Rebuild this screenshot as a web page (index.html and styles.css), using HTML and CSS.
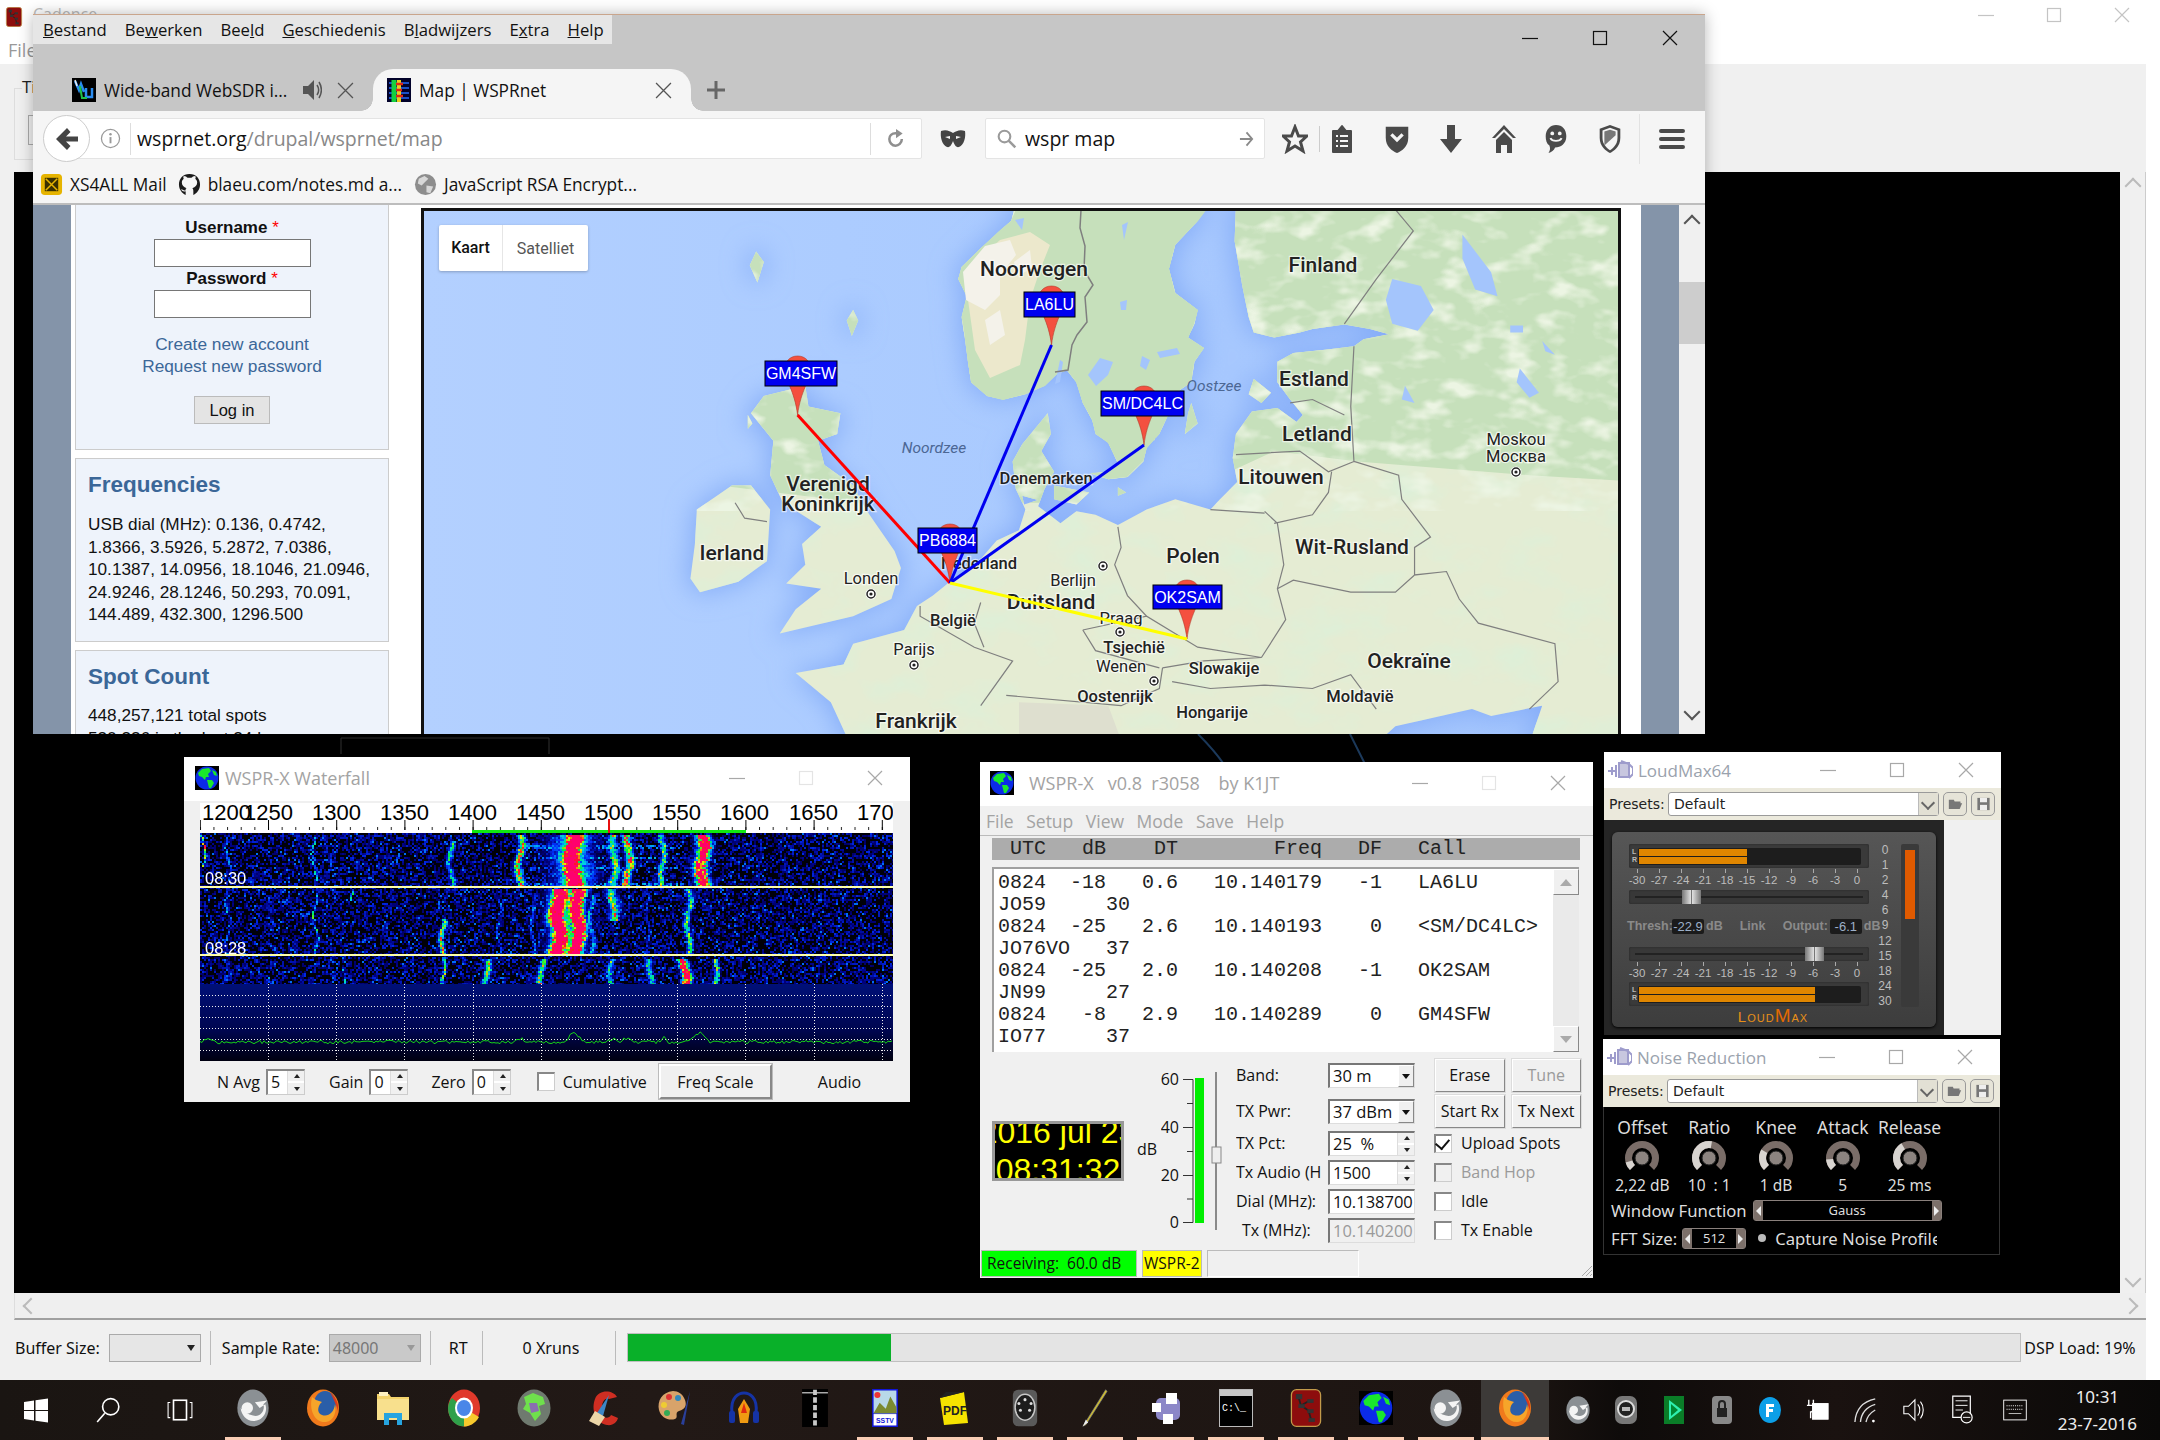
FILE: index.html
```html
<!DOCTYPE html>
<html lang="nl">
<head>
<meta charset="utf-8">
<title>Desktop</title>
<link rel="stylesheet" href="styles.css">
</head>
<body>
<svg class="defs" width="0" height="0" aria-hidden="true">
  <symbol id="min" viewBox="0 0 16 16"><path d="M0 8.5H16" stroke="currentColor" stroke-width="1.2" fill="none"/></symbol>
  <symbol id="max" viewBox="0 0 16 16"><rect x="1.5" y="1.5" width="13" height="13" stroke="currentColor" stroke-width="1.2" fill="none"/></symbol>
  <symbol id="cls" viewBox="0 0 16 16"><path d="M1 1L15 15M15 1L1 15" stroke="currentColor" stroke-width="1.2" fill="none"/></symbol>
  <symbol id="earth" viewBox="0 0 24 24"><rect width="24" height="24" fill="#000"/><circle cx="12" cy="12" r="11.5" fill="#0b2be8"/><path d="M3 7L7 3L14 2L16 5L13 8L14 11L11 11L10 14L7 11L4 10ZM12 14L17 14L19 17L16 22L14 22L13 18ZM17 4L21 6L22 10L19 9Z" fill="#19e82c"/></symbol>
  <symbol id="cad" viewBox="0 0 24 30"><rect x=".5" y=".5" width="23" height="29" rx="4" fill="#8d0d0d" stroke="#c29a4a"/><path d="M6 6L8 13L14 17L16 24M8 13L15 9" stroke="#222" stroke-width="1.4" fill="none"/><rect x="4" y="4" width="5" height="4" fill="#333"/><rect x="6" y="12" width="5" height="3" fill="#333"/><rect x="13" y="8" width="5" height="3" fill="#333"/><rect x="13" y="16" width="5" height="3" fill="#333"/><rect x="14" y="23" width="5" height="3" fill="#333"/></symbol>
  <symbol id="swirl" viewBox="0 0 34 40"><ellipse cx="17" cy="20" rx="16.5" ry="19.5" fill="#8b9094"/><path d="M4 20C5 30 14 37 24 32C30 29 32 22 30 16L24 20L19 14L32 12L28 16C30 24 24 30 17 28C12 27 7 24 4 20Z" fill="#f4f4f4"/><circle cx="11" cy="20" r="6" fill="#f4f4f4"/></symbol>
  <symbol id="ff" viewBox="0 0 34 38"><ellipse cx="17" cy="19" rx="16" ry="18.5" fill="#f07a1c"/><ellipse cx="19" cy="15" rx="11" ry="13" fill="#2a5ea8"/><path d="M6 8C3 20 8 34 20 33C28 32 31 22 29 15C28 24 22 28 16 26C10 24 12 16 16 13L10 11Z" fill="#f6a52a"/><path d="M24 3C30 9 33 14 32 22C30 15 27 9 24 3Z" fill="#d9391b"/></symbol>
  <symbol id="folder" viewBox="0 0 34 38"><path d="M1 5H13L15 8H33V31H1Z" fill="#f3d36b"/><path d="M1 10H33V31H1Z" fill="#f8e08d"/><path d="M8 36V24H26V36H21V29H13V36Z" fill="#26a4e0"/><rect x="3" y="3" width="9" height="4" fill="#fff2c2"/></symbol>
  <symbol id="chrome" viewBox="0 0 34 38"><ellipse cx="17" cy="19" rx="16" ry="18.5" fill="#e0392b"/><path d="M17 19L32 28C28 35 22 37.5 17 37.5Z" fill="#f7c92d"/><path d="M17 19V37.5C7 37.5 1 28 1 19C1 15 3 11 5 9Z" fill="#2fa04a"/><ellipse cx="17" cy="19" rx="9" ry="10.5" fill="#fff"/><ellipse cx="17" cy="19" rx="7" ry="8" fill="#4a86e8"/></symbol>
  <symbol id="gglobe" viewBox="0 0 34 38"><ellipse cx="17" cy="19" rx="16.5" ry="18.5" fill="#6f7a6f"/><path d="M7 8L16 4L26 8L28 15L22 17L24 25L18 32L13 24L6 20L9 15Z" fill="#6fe04c"/><path d="M12 14L20 14L22 22L14 24Z" fill="#8a6fb0"/></symbol>
  <symbol id="ccl" viewBox="0 0 34 38"><path d="M30 8C26 1 12 0 8 10C4 20 8 34 20 36C26 37 30 33 31 29L24 26C22 30 16 30 15 24C14 16 16 8 22 10Z" fill="#cf2e22"/><path d="M22 6L10 24L16 27Z" fill="#3d86c6"/><path d="M8 22L18 28L12 37L2 32Z" fill="#ecd6a8"/></symbol>
  <symbol id="palette" viewBox="0 0 34 38"><path d="M16 2C5 3 0 12 2 21C4 29 12 32 18 30C22 28 17 24 22 22C28 20 30 17 28 11C26 5 21 2 16 2Z" fill="#d8a36a"/><circle cx="12" cy="8" r="3" fill="#d33"/><circle cx="21" cy="9" r="3" fill="#38b"/><circle cx="7" cy="16" r="3" fill="#ec3"/><circle cx="10" cy="24" r="3" fill="#3a5"/><path d="M33 2L27 36L24 35Z" fill="#2a3f9a"/></symbol>
  <symbol id="aud" viewBox="0 0 34 38"><path d="M5 24C3 8 12 4 17 4C22 4 31 8 29 24" stroke="#1533a5" stroke-width="3" fill="none"/><rect x="2" y="22" width="6" height="12" rx="2" fill="#1533a5"/><rect x="26" y="22" width="6" height="12" rx="2" fill="#1533a5"/><path d="M17 10L23 20L21 34H13L11 20Z" fill="#f09a12"/><path d="M17 14L20 24H14Z" fill="#e02a10"/></symbol>
  <symbol id="tall" viewBox="0 0 34 50"><rect width="34" height="50" fill="#000"/><path d="M0 5H34" stroke="#ddd" stroke-width="1.5"/><path d="M17 1V50" stroke="#c8c8c8" stroke-width="5" stroke-dasharray="7 3"/></symbol>
  <symbol id="sstv" viewBox="0 0 34 50"><rect width="34" height="50" fill="#1116d8"/><rect x="2" y="2" width="30" height="30" fill="#b8d8e8"/><path d="M2 32L10 18L18 26L24 10L32 24V32Z" fill="#7b8a30"/><circle cx="7" cy="8" r="4" fill="#e33"/><rect x="2" y="33" width="30" height="15" fill="#fff"/><text x="17" y="45" class="ico-sstv">SSTV</text></symbol>
  <symbol id="pdf" viewBox="0 0 34 38"><path d="M2 9L26 3L30 34L6 36Z" fill="#f6e300"/><path d="M2 9L8 3H26L2 9Z" fill="#222"/><text x="17" y="26" class="ico-pdf">PDF</text></symbol>
  <symbol id="din" viewBox="0 0 34 50"><rect x="1" y="1" width="32" height="48" rx="7" fill="#5a5a5a"/><ellipse cx="17" cy="24" rx="13" ry="17" fill="#1d1d1d" stroke="#c8c8c8" stroke-width="2"/><circle cx="17" cy="14" r="2" fill="#ddd"/><circle cx="9" cy="19" r="2" fill="#ddd"/><circle cx="25" cy="19" r="2" fill="#ddd"/><circle cx="11" cy="28" r="2" fill="#ddd"/><circle cx="23" cy="28" r="2" fill="#ddd"/></symbol>
  <symbol id="pen" viewBox="0 0 34 50"><path d="M31 1L3 46L1 49L5 47L33 3Z" fill="#d8c52a" stroke="#777"/><path d="M5 40L1 49L8 44Z" fill="#eee"/></symbol>
  <symbol id="cubes" viewBox="0 0 34 38"><rect x="7" y="9" width="24" height="22" rx="5" fill="#8c87c8"/><rect x="17" y="4" width="11" height="11" fill="#fff"/><rect x="3" y="14" width="9" height="9" fill="#fff"/><rect x="14" y="25" width="10" height="10" fill="#fff"/></symbol>
  <symbol id="cmd" viewBox="0 0 34 38"><rect x=".5" y=".5" width="33" height="37" fill="#000" stroke="#bbb"/><rect x="1" y="1" width="32" height="6" fill="#c6c6c6"/><text x="3" y="22" class="ico-cmd">C:\_</text></symbol>
  <symbol id="robot" viewBox="0 0 24 30"><rect x="1" y="1" width="22" height="28" rx="7" fill="#777"/><circle cx="12" cy="14" r="8" fill="#222" stroke="#ddd" stroke-width="2"/><rect x="8" y="12" width="8" height="4" fill="#bbb"/></symbol>
</svg>

<div class="desktop">
  <div class="backwin">
    <div class="back-title">
      <svg class="ico-app"><use href="#cad"/></svg>
      <span class="back-name">Cadence</span>
      <div class="caps back-caps">
        <svg class="cap"><use href="#min"/></svg>
        <svg class="cap"><use href="#max"/></svg>
        <svg class="cap"><use href="#cls"/></svg>
      </div>
    </div>
    <div class="back-menu">File</div>
    <div class="back-tool"><div class="back-group"><span class="back-legend">Ti</span><span class="back-combo"></span></div></div>
    <div class="back-mid">
      <div class="back-black"></div>
      <div class="back-vscroll"><span class="chev chev-up"></span><span class="chev chev-down"></span></div>
    </div>
    <div class="back-hscroll"><span class="chev chev-left"></span><span class="chev chev-right"></span></div>
    <div class="statusbar">
      <span class="st-label st-buffer">Buffer Size:</span>
      <span class="st-combo"></span>
      <span class="st-sep"></span>
      <span class="st-label">Sample Rate:</span>
      <span class="st-combo st-off">48000</span>
      <span class="st-sep"></span>
      <span class="st-label st-rt">RT</span>
      <span class="st-sep"></span>
      <span class="st-label st-xr">0 Xruns</span>
      <span class="st-sep"></span>
      <div class="st-prog"><div class="st-fill"></div></div>
      <span class="st-label st-dsp">DSP Load: 19%</span>
    </div>
  </div>

  <div class="taskbar">
    <div class="tb-start">
      <span class="tb-slot"><svg class="tb-win" viewBox="0 0 24 24"><path d="M0 3.5L10 2V11.500H0ZM11.500 1.800L24 0V11.500H11.500ZM0 12.500H10V22L0 20.500ZM11.500 12.500H24V24L11.500 22.200Z" fill="#fff"/></svg></span>
      <span class="tb-slot"><svg class="tb-s" viewBox="0 0 24 24"><circle cx="14.500" cy="9" r="7.500" fill="none" stroke="#fff" stroke-width="1.500"/><path d="M9 15L2 23" stroke="#fff" stroke-width="1.500"/></svg></span>
      <span class="tb-slot"><svg class="tb-s" viewBox="0 0 24 24"><rect x="6" y="3" width="12" height="18" fill="none" stroke="#fff" stroke-width="1.500"/><path d="M3 5H1V19H3M21 5H23V19H21" fill="none" stroke="#fff"/></svg></span>
    </div>
    <div class="tb-apps">
      <span class="tb-app on"><svg class="tb-i"><use href="#swirl"/></svg></span>
      <span class="tb-app"><svg class="tb-i"><use href="#ff"/></svg></span>
      <span class="tb-app"><svg class="tb-i"><use href="#folder"/></svg></span>
      <span class="tb-app"><svg class="tb-i"><use href="#chrome"/></svg></span>
      <span class="tb-app"><svg class="tb-i"><use href="#gglobe"/></svg></span>
      <span class="tb-app"><svg class="tb-i"><use href="#ccl"/></svg></span>
      <span class="tb-app"><svg class="tb-i"><use href="#palette"/></svg></span>
      <span class="tb-app"><svg class="tb-i"><use href="#aud"/></svg></span>
      <span class="tb-app"><svg class="tb-i"><use href="#tall"/></svg></span>
      <span class="tb-app on"><svg class="tb-i"><use href="#sstv"/></svg></span>
      <span class="tb-app on"><svg class="tb-i"><use href="#pdf"/></svg></span>
      <span class="tb-app on"><svg class="tb-i"><use href="#din"/></svg></span>
      <span class="tb-app on"><svg class="tb-i"><use href="#pen"/></svg></span>
      <span class="tb-app on"><svg class="tb-i"><use href="#cubes"/></svg></span>
      <span class="tb-app on"><svg class="tb-i"><use href="#cmd"/></svg></span>
      <span class="tb-app on"><svg class="tb-i"><use href="#cad"/></svg></span>
      <span class="tb-app on"><svg class="tb-i"><use href="#earth"/></svg></span>
      <span class="tb-app on"><svg class="tb-i"><use href="#swirl"/></svg></span>
      <span class="tb-app on active"><svg class="tb-i"><use href="#ff"/></svg></span>
    </div>
    <div class="tray">
      <span class="tr"><svg class="tr-i"><use href="#swirl"/></svg></span>
      <span class="tr"><svg class="tr-i"><use href="#robot"/></svg></span>
      <span class="tr"><svg class="tr-i" viewBox="0 0 24 30"><rect x="2" y="1" width="20" height="28" fill="#0a7d28"/><path d="M7 5L20 15L7 25Z" fill="#2ef0b0"/><path d="M9 9L16 15L9 21Z" fill="#083"/></svg></span>
      <span class="tr"><svg class="tr-i" viewBox="0 0 24 30"><rect x="2" y="1" width="20" height="28" rx="4" fill="#888"/><rect x="7" y="13" width="10" height="9" fill="#222"/><path d="M9 13V9C9 5 15 5 15 9V13" stroke="#222" stroke-width="2" fill="none"/></svg></span>
      <span class="tr"><svg class="tr-i" viewBox="0 0 24 30"><ellipse cx="12" cy="15" rx="11" ry="13" fill="#0c9fe8"/><path d="M8 9H16V12H11V14H15V17H11V22H8Z" fill="#fff"/></svg></span>
      <span class="tr"><svg class="tr-i" viewBox="0 0 26 30"><rect x="7" y="8" width="17" height="17" fill="#fff" stroke="#fff"/><path d="M3 4V10M8 4V10M1 10H10V14L6 17H5V24" stroke="#fff" stroke-width="1.500" fill="none"/></svg></span>
      <span class="tr"><svg class="tr-i" viewBox="0 0 26 30"><path d="M1 28C2 14 9 6 23 3M7 28C8 18 13 12 23 9M13 28C14 23 16 19 23 15" stroke="#ddd" fill="none" stroke-width="1.500"/><circle cx="21" cy="27" r="1.500" fill="#fff"/></svg></span>
      <span class="tr"><svg class="tr-i" viewBox="0 0 26 30"><path d="M2 11H7L14 4V26L7 19H2Z" fill="none" stroke="#fff" stroke-width="1.200"/><path d="M17 9C20 12 20 18 17 21M20 6C24 11 24 19 20 24" fill="none" stroke="#fff" stroke-width="1.200"/></svg></span>
      <span class="tr"><svg class="tr-i" viewBox="0 0 26 32"><path d="M3 1H22V24H3Z" fill="none" stroke="#fff" stroke-width="1.300"/><path d="M6 6H19M6 11H19M6 16H14" stroke="#fff"/><circle cx="18" cy="24" r="6" fill="#1a1512" stroke="#fff" stroke-width="1.300"/><path d="M14 24H22" stroke="#fff"/></svg></span>
      <span class="tr tr-kb"><svg class="tr-i" viewBox="0 0 34 30"><rect x="1" y="1" width="32" height="28" fill="none" stroke="#fff" stroke-width="1.300"/><path d="M5 9H29M5 14H29" stroke="#fff" stroke-dasharray="1.500 1.500" stroke-width="1.300"/><path d="M8 20H26" stroke="#fff"/></svg></span>
      <span class="clock"><span>10:31</span><span>23-7-2016</span></span>
    </div>
  </div>

  <svg class="ghost" viewBox="0 0 1100 40"><path d="M1 20V4H209V20" fill="none" stroke="#333"/><path d="M858 0C866 8 880 22 890 40M1010 0L1030 40M1130 0C1134 14 1136 28 1134 40M1150 0L1152 40" fill="none" stroke="#1c3a5c" stroke-width="2"/></svg>

  <!-- browser -->
  <section class="browser">
    <div class="br-top">
      <div class="br-row1">
        <div class="br-menu">
          <span><u>B</u>estand</span><span>Be<u>w</u>erken</span><span>Bee<u>l</u>d</span><span><u>G</u>eschiedenis</span><span>B<u>l</u>adwijzers</span><span>E<u>x</u>tra</span><span><u>H</u>elp</span>
        </div>
        <div class="caps br-caps">
          <svg class="cap"><use href="#min"/></svg>
          <svg class="cap"><use href="#max"/></svg>
          <svg class="cap"><use href="#cls"/></svg>
        </div>
      </div>
      <div class="tabs">
        <div class="tab">
          <svg class="tab-ico" viewBox="0 0 24 24"><rect width="24" height="24" fill="#000"/><path d="M3 3L7 12L9 6L12 14M14 10V19H20V10" stroke="#2a8cf0" stroke-width="2.500" fill="none"/><path d="M8 8L10 20H15" stroke="#1ec24a" stroke-width="2" fill="none"/><path d="M3 2L5 8" stroke="#eee" stroke-width="1.500"/></svg>
          <span class="tab-text">Wide-band WebSDR i...</span>
          <svg class="spk" viewBox="0 0 20 24"><path d="M1 8H6L12 2V22L6 16H1Z" fill="#555"/><path d="M15 7C17 10 17 14 15 17M17 4C20 9 20 15 17 20" stroke="#555" fill="none" stroke-width="1.500"/></svg>
          <svg class="tab-x"><use href="#cls"/></svg>
        </div>
        <div class="tab tab-on">
          <svg class="tab-ico" viewBox="0 0 24 24"><rect width="24" height="24" fill="#02022a"/><path d="M2 5H22M2 10H22M2 15H22M2 20H22" stroke="#1a50c8" stroke-width="2"/><path d="M7 2V24" stroke="#15d040" stroke-width="5"/><path d="M12 2V24" stroke="#e8d020" stroke-width="4"/><path d="M9 6H16M9 12H15M9 18H16" stroke="#e02818" stroke-width="2.500"/></svg>
          <span class="tab-text">Map | WSPRnet</span>
          <svg class="tab-x"><use href="#cls"/></svg>
        </div>
        <span class="tab-plus"><svg viewBox="0 0 20 20"><path d="M10 1V19M1 10H19" stroke="#666" stroke-width="3"/></svg></span>
      </div>
    </div>
    <div class="nav">
      <span class="back-btn"><svg viewBox="0 0 24 24"><path d="M12 1L1 12L12 23L15.500 19L11 14.500H23V9.500H11L15.500 5Z" fill="#444"/></svg></span>
      <div class="urlbox">
        <svg class="info" viewBox="0 0 22 22"><circle cx="11" cy="11" r="9.500" fill="none" stroke="#999" stroke-width="1.300"/><path d="M11 9.500V16" stroke="#999" stroke-width="2"/><circle cx="11" cy="6.500" r="1.300" fill="#999"/></svg>
        <span class="url"><b>wsprnet.org</b>/drupal/wsprnet/map</span>
        <svg class="reload" viewBox="0 0 24 24"><path d="M19 12C19 17 15 20 11.500 20C7 20 4 16 4 12C4 8 7 5 11.500 5H14" fill="none" stroke="#8f8f8f" stroke-width="3"/><path d="M12 0L20 5.500L12 11Z" fill="#8f8f8f"/></svg>
      </div>
      <svg class="mask" viewBox="0 0 26 20"><path d="M1 2C6 0 10 2 13 4C16 2 20 0 25 2C26 8 24 16 19 18C16 19 14 15 13 12C12 15 10 19 7 18C2 16 0 8 1 2Z" fill="#444"/><path d="M5 8L10 7L10 10ZM21 8L16 7L16 10Z" fill="#f5f5f5"/></svg>
      <div class="searchbox">
        <svg class="mag" viewBox="0 0 24 24"><circle cx="9" cy="9" r="7" fill="none" stroke="#9a9a9a" stroke-width="2.500"/><path d="M14 14L22 22" stroke="#9a9a9a" stroke-width="3"/></svg>
        <span class="q">wspr map</span>
        <svg class="go" viewBox="0 0 16 18"><path d="M1 9H14M8 2L14 9L8 16" fill="none" stroke="#8a8a8a" stroke-width="2"/></svg>
      </div>
      <div class="tools">
        <svg class="t t-star" viewBox="0 0 26 30"><path d="M13 3L16.500 12H25L18.500 18L21 27L13 22L5 27L7.500 18L1 12H9.500Z" fill="none" stroke="#4a4a4a" stroke-width="3"/></svg>
        <span class="t-sep"></span>
        <svg class="t t-clip" viewBox="0 0 22 30"><path d="M2 7H7L11 2L15 7H20V28H2Z" fill="#4a4a4a" stroke="#4a4a4a" stroke-width="2" stroke-linejoin="round"/><path d="M5 12H7M5 17H7M5 22H7M9 12H17M9 17H17M9 22H17" stroke="#f5f5f5" stroke-width="2"/></svg>
        <svg class="t t-poc" viewBox="0 0 26 32"><path d="M1 3H25V15C25 24 18 29 13 31C8 29 1 24 1 15Z" fill="#4a4a4a"/><path d="M7 11L13 17L19 11" fill="none" stroke="#f5f5f5" stroke-width="3.500"/></svg>
        <svg class="t t-dl" viewBox="0 0 24 30"><path d="M8 1H16V15H23L12 29L1 15H8Z" fill="#4a4a4a"/></svg>
        <svg class="t t-home" viewBox="0 0 26 30"><path d="M13 1L25 14H22L13 5L4 14H1Z" fill="#4a4a4a"/><path d="M13 8L21 16V29H16V21H10V29H5V16Z" fill="#4a4a4a"/></svg>
        <svg class="t t-smile" viewBox="0 0 24 32"><path d="M12 1C19 1 23 6 23 13C23 21 17 25 11 25C10 28 7 30 4 31C6 28 6 26 5 23C2 21 1 17 1 13C1 6 6 1 12 1Z" fill="#4a4a4a"/><circle cx="8" cy="10" r="2" fill="#f5f5f5"/><circle cx="16" cy="10" r="2" fill="#f5f5f5"/><path d="M6 15C8 19 16 19 18 15" fill="none" stroke="#f5f5f5" stroke-width="2"/></svg>
        <svg class="t t-sh" viewBox="0 0 24 32"><path d="M12 1L23 5V15C23 24 16 29 12 31C8 29 1 24 1 15V5Z" fill="#4a4a4a"/><path d="M12 4L20 7V15C20 22 15 26 12 28C9 26 4 22 4 15V7Z" fill="#f5f5f5"/><path d="M12 6L18 8V12L6 23C6 21 6 18 6 15V8Z" fill="#777"/></svg>
        <span class="t-sep t-sep2"></span>
        <svg class="t t-menu" viewBox="0 0 26 24"><path d="M2 4H24M2 12H24M2 20H24" stroke="#4a4a4a" stroke-width="4" stroke-linecap="round"/></svg>
      </div>
    </div>
    <div class="bookmarks">
      <svg class="bm-ico" viewBox="0 0 24 24"><rect x="1" y="1" width="22" height="22" rx="4" fill="#e6b400"/><rect x="5" y="5" width="14" height="14" fill="#3a3000"/><path d="M6 6L18 18M18 6L6 18" stroke="#e6b400" stroke-width="1.500"/></svg>
      <span class="bm">XS4ALL Mail</span>
      <svg class="bm-ico bm-gh" viewBox="0 0 24 24"><path d="M12 1C5 1 1 6 1 12C1 17 4 21 8 23V19C5 20 4 18 3 17C5 17 6 19 8 18C8 17 8 16 9 16C6 15 4 13 4 10C4 8 5 7 6 6C5 5 6 3 6 3C8 3 9 4 10 5C11 5 13 5 14 5C15 4 16 3 18 3C18 3 19 5 18 6C19 7 20 8 20 10C20 13 18 15 15 16C16 17 16 18 16 19V23C20 21 23 17 23 12C23 6 19 1 12 1Z" fill="#1a1a1a"/></svg>
      <span class="bm">blaeu.com/notes.md a...</span>
      <svg class="bm-ico bm-gl" viewBox="0 0 24 24"><circle cx="12" cy="12" r="11" fill="#8d8d8d"/><path d="M5 6L11 3L15 6L11 10L8 13L4 11ZM13 13L20 14L17 21L13 20Z" fill="#d8d8d8"/></svg>
      <span class="bm">JavaScript RSA Encrypt...</span>
    </div>
    <div class="web">
      <div class="web-strip"></div>
      <div class="web-main">
        <aside class="side">
          <div class="blk blk-login">
            <label class="f-label">Username <i>*</i></label>
            <span class="f-input"></span>
            <label class="f-label f-2">Password <i>*</i></label>
            <span class="f-input"></span>
            <a class="f-link f-l1">Create new account</a>
            <a class="f-link">Request new password</a>
            <span class="f-btn">Log in</span>
          </div>
          <div class="blk blk-freq">
            <h2>Frequencies</h2>
            <p>USB dial (MHz): 0.136, 0.4742,<br>1.8366, 3.5926, 5.2872, 7.0386,<br>10.1387, 14.0956, 18.1046, 21.0946,<br>24.9246, 28.1246, 50.293, 70.091,<br>144.489, 432.300, 1296.500</p>
          </div>
          <div class="blk blk-spot">
            <h2>Spot Count</h2>
            <p>448,257,121 total spots<br>530,336 in the last 24 hours</p>
          </div>
        </aside>
        <div class="map">
          <svg class="map-svg" viewBox="424 211 1197 525" preserveAspectRatio="none">
            <defs>
              <path id="landp" transform="translate(700 200) scale(.638 .344)" d="M495 10L488 60L470 90L440 140L410 195L405 230L418 280L410 340L415 400L420 470L425 530L450 570L475 580L510 565L540 540L560 505L575 495L590 530L600 590L615 640L620 680L640 705L655 765L640 790L612 795L640 812L670 805L695 760L700 720L720 680L735 620L730 580L770 530L775 470L790 430L765 400L775 360L780 320L745 270L735 200L745 130L780 60L795 10Z
              M840 10L838 120L850 250L860 340L868 385L900 400L940 385L960 375L1010 362L1050 375L1080 390L1040 405L1025 425L980 435L930 445L905 470L905 530L925 580L945 625L935 645L905 605L865 615L840 680L835 750L842 820L815 870L800 900L745 870L700 900L655 945L620 915L590 905L565 940L530 890L540 840L555 790L535 730L550 680L545 620L505 710L490 760L495 840L510 900L500 960L465 990L430 1065L395 1105L365 1150L340 1180L320 1250L240 1290L225 1350L150 1375L205 1460L235 1580L1060 1580L1090 1530L1210 1480L1240 1500L1320 1470L1300 1580L1450 1580L1450 10Z
              M100 570L165 540L170 600L220 620L215 680L185 700L195 770L240 830L260 900L305 1020L315 1070L300 1160L240 1210L125 1260L150 1190L190 1130L135 1115L165 1060L160 1000L190 950L130 880L110 800L115 700L80 620Z
              M50 830L80 830L110 900L105 1050L60 1110L0 1140L-15 1100L-8 1000L-5 900Z
              M770 590L780 650L760 680L765 620ZM868 520L895 560L880 590L860 565ZM555 830L610 850L590 885L555 870ZM715 640L722 660L712 700ZM88 150L100 180L90 240L78 190ZM240 320L248 350L238 395L230 350ZM75 625L82 650L75 665ZM655 835L668 850L655 860ZM505 860L530 872L508 885Z"/>
              <clipPath id="landclip"><use href="#landp"/></clipPath>
              <filter id="coast" x="-10%" y="-10%" width="120%" height="120%"><feGaussianBlur stdDeviation="13"/></filter>
              <filter id="patch" x="0" y="0" width="100%" height="100%"><feTurbulence type="fractalNoise" baseFrequency=".018 .028" numOctaves="4" seed="7"/><feColorMatrix values="0 0 0 0 .72 0 0 0 0 .87 0 0 0 0 .69 2.400 0 0 0 -1.150"/></filter>
              <filter id="patch2" x="0" y="0" width="100%" height="100%"><feTurbulence type="fractalNoise" baseFrequency=".03 .05" numOctaves="3" seed="3"/><feColorMatrix values="0 0 0 0 .84 0 0 0 0 .91 0 0 0 0 .77 0 3.500 0 0 -1.700"/></filter>
              <linearGradient id="ocean" x1="0" x2="1" y1="0" y2="0"><stop offset="0" stop-color="#b3d0ff"/><stop offset=".35" stop-color="#acccff"/><stop offset="1" stop-color="#a2c4fd"/></linearGradient>
              <path id="pin" d="M13 0C21 0 26 6 26 13C26 24 16 34 13 59C10 34 0 24 0 13C0 6 5 0 13 0Z" fill="#f4503f" stroke="#b23a2a" stroke-width=".6"/>
              <g id="dot"><circle r="5.500" fill="#fff"/><circle r="4" fill="none" stroke="#222" stroke-width="1.500"/><circle r="1.600" fill="#222"/></g>
            </defs>
            <rect x="424" y="211" width="1197" height="525" fill="url(#ocean)"/>
            <use href="#landp" class="coast" filter="url(#coast)"/>
            <use href="#landp" class="land-base"/>
            <g clip-path="url(#landclip)">
              <rect x="424" y="211" width="1197" height="525" filter="url(#patch)"/>
              <path transform="translate(700 200) scale(.638 .344)" d="M-100 10H1570V830L1300 800L1030 760L900 730L760 850L600 880L500 880L380 880L250 880L-100 800Z" fill="#c6e0bb"/>
              <rect x="424" y="211" width="1197" height="300" filter="url(#patch2)"/>
              <path transform="translate(700 200) scale(.638 .344)" d="M500 1460L640 1470L660 1570L500 1570Z" fill="#dedfcf"/>
            </g>
            <g transform="translate(700 200) scale(.638 .344)" fill="#a4c5fc">
              <path d="M1085 230L1130 250L1150 320L1125 380L1085 360L1075 290ZM1195 100L1240 210L1250 280L1215 260L1195 170ZM1285 490L1315 560L1300 575L1280 530ZM1270 365H1290V385H1270ZM1105 540L1120 590L1100 580ZM1320 410L1340 450L1325 440Z"/>
            </g>
            <g class="borders" transform="translate(700 200) scale(.638 .344)">
              <path d="M1090 28L1118 90L1060 230L1010 360M1025 425L1020 600L1025 760M925 590L960 580L1010 625M840 740L940 730L985 790L1025 760M1025 760L1095 800L1100 870L1145 980L1120 1010L1120 1090L1170 1080L1190 1160L1220 1230L1340 1290L1345 1400L1300 1480M885 905L905 940L915 1060L905 1130L918 1220L880 1330M900 940L960 915L985 850L990 790M800 900L885 910M905 1130L930 1105L1020 1140L1090 1140L1120 1090M655 950L660 1010L650 1060L670 1150L700 1210M600 1250L700 1210L780 1300L880 1330M725 1360L790 1340L880 1330M885 1410L960 1420L1020 1380L1060 1480M725 1360L720 1420L660 1470L480 1440M345 1180L345 1210L430 1300L490 1340L440 1470M440 1170L430 1230L445 1300M600 1250L620 1310L720 1360M885 1410L800 1420L740 1400M55 880L70 925L105 935"/>
            </g>
            <g class="scand">
              <path class="sc-land" d="M1016 209L1011 221L999 231L981 248L962 267L958 279L967 296L962 317L965 338L968 362L971 382L987 396L1003 400L1025 394L1045 386L1057 374L1067 370L1076 382L1083 403L1092 420L1096 434L1108 443L1118 463L1108 472L1090 473L1108 479L1127 477L1143 461L1147 448L1159 434L1169 413L1166 400L1191 382L1194 362L1204 348L1188 338L1194 324L1198 310L1175 293L1169 269L1175 245L1198 221L1207 209Z"/>
              <path class="sc-cream" d="M975 262L1000 240L1030 232L1050 245L1040 270L1030 300L1025 340L1020 365L990 378L975 350L968 300Z"/>
              <path class="sc-snow" d="M963 272L985 246L1010 240L1016 255L1000 275L1000 295L985 310L966 300ZM985 320L1000 310L1005 335L990 345ZM1014 262L1030 250L1032 268L1018 276Z"/>
              <path class="sc-lake" d="M1088 375L1100 358L1113 362L1108 375L1096 386ZM1120 302L1127 300L1126 310L1121 310ZM1142 356L1150 360L1146 370L1140 366ZM1157 352L1177 348L1180 354L1160 358ZM1055 384L1060 360L1063 362L1060 382ZM1015 220L1024 218L1022 230ZM1122 225L1128 222L1124 240Z"/>
              <path class="sc-border" d="M1081 210L1080 228L1085 246L1084 270L1093 285L1085 297L1087 322L1077 335L1072 345L1068 370L1055 372"/>
            </g>
            <g class="lbl-b lbl-19">
              <text x="1034" y="276">Noorwegen</text><text x="1323" y="272">Finland</text><text x="1314" y="386">Estland</text><text x="1317" y="441">Letland</text><text x="1281" y="484">Litouwen</text><text x="1352" y="554">Wit-Rusland</text><text x="1193" y="563">Polen</text><text x="1409" y="668">Oekraïne</text><text x="1051" y="609">Duitsland</text><text x="916" y="728">Frankrijk</text><text x="732" y="560">Ierland</text><text x="828" y="491">Verenigd</text><text x="828" y="511">Koninkrijk</text>
            </g>
            <g class="lbl-b lbl-15">
              <text x="1360" y="702">Moldavië</text><text x="1212" y="718">Hongarije</text><text x="1224" y="674">Slowakije</text><text x="1115" y="702">Oostenrijk</text><text x="1134" y="653">Tsjechië</text><text x="953" y="626">België</text><text x="979" y="569">Nederland</text><text x="1046" y="484">Denemarken</text>
            </g>
            <g class="lbl-r">
              <text x="1121" y="672">Wenen</text><text x="1121" y="624">Praag</text><text x="1073" y="586">Berlijn</text><text x="914" y="655">Parijs</text><text x="871" y="584">Londen</text><text x="1516" y="445">Moskou</text><text x="1516" y="462">Москва</text>
            </g>
            <g class="lbl-i"><text x="934" y="453">Noordzee</text><text x="1214" y="391">Oostzee</text></g>
            <use href="#dot" x="1516" y="472"/><use href="#dot" x="871" y="594"/><use href="#dot" x="914" y="665"/><use href="#dot" x="1103" y="566"/><use href="#dot" x="1120" y="632"/><use href="#dot" x="1154" y="681"/>
            <use href="#pin" x="1038.500" y="286"/><use href="#pin" x="784.600" y="356"/><use href="#pin" x="1131" y="386"/><use href="#pin" x="937" y="524"/><use href="#pin" x="1174" y="580"/>
            <g class="links">
              <path d="M950 583L797.600 415" stroke="#f00"/><path d="M950 583L1051.500 345" stroke="#0000f0"/><path d="M950 583L1144 445" stroke="#0000f0"/><path d="M950 583L1187 639" stroke="#ff0"/>
            </g>
            <g class="pin-box">
              <rect x="1024" y="292" width="51" height="25"/><rect x="765" y="361" width="72" height="25"/><rect x="1101" y="391" width="83" height="25"/><rect x="918" y="528" width="59" height="25"/><rect x="1153" y="585" width="69" height="24"/>
            </g>
            <g class="pin-text">
              <text x="1049.500" y="310">LA6LU</text><text x="801" y="379">GM4SFW</text><text x="1142.500" y="409">SM/DC4LC</text><text x="947.500" y="546">PB6884</text><text x="1187.500" y="603">OK2SAM</text>
            </g>
          </svg>
          <div class="maptype"><span class="mt-on">Kaart</span><span class="mt-off">Satelliet</span></div>
        </div>
      </div>
      <div class="web-strip"></div>
      <div class="web-scroll"><span class="chev chev-up dark"></span><span class="web-thumb"></span><span class="chev chev-down dark"></span></div>
    </div>
  </section>

  <!-- waterfall -->
  <section class="win wf">
    <div class="w-title">
      <svg class="w-ico"><use href="#earth"/></svg>
      <span class="w-cap">WSPR-X Waterfall</span>
      <div class="caps dim wf-caps"><svg class="cap"><use href="#min"/></svg><svg class="cap cap-faint"><use href="#max"/></svg><svg class="cap"><use href="#cls"/></svg></div>
    </div>
    <div class="wf-body">
      <svg class="ruler" viewBox="200 803 693 30">
        <defs>
          <pattern id="minor" width="13.640" height="10" patternUnits="userSpaceOnUse" patternTransform="translate(268 820)"><rect width="1" height="3" y="7" fill="#222"/></pattern>
          <pattern id="major" width="68.200" height="10" patternUnits="userSpaceOnUse" patternTransform="translate(268 820)"><rect width="1" height="10" fill="#000"/></pattern>
        </defs>
        <rect x="200" y="803" width="693" height="30" fill="#fff"/>
        <rect x="200" y="820" width="693" height="10" fill="url(#minor)"/>
        <rect x="200" y="820" width="693" height="10" fill="url(#major)"/>
        <g class="ruler-t"><text x="202" y="820">1200</text><text x="244" y="820">1250</text><text x="312" y="820">1300</text><text x="380" y="820">1350</text><text x="448" y="820">1400</text><text x="516" y="820">1450</text><text x="584" y="820">1500</text><text x="652" y="820">1550</text><text x="720" y="820">1600</text><text x="789" y="820">1650</text><text x="857" y="820">170</text></g>
        <rect x="472" y="830" width="274" height="3" fill="#10e810"/>
        <rect x="608" y="819" width="2" height="14" fill="#e81010"/>
      </svg>
      <div class="wf-view">
        <canvas id="wf" class="wf-canvas" width="693" height="228"></canvas>
        <span class="wf-t wf-t1">08:30</span>
        <span class="wf-t wf-t2">08:28</span>
      </div>
    </div>
    <div class="wf-ctl">
      <span class="wf-l">N Avg</span><span class="spin"><em>5</em><i class="spb"></i></span>
      <span class="wf-l wf-gain">Gain</span><span class="spin"><em>0</em><i class="spb"></i></span>
      <span class="wf-l wf-zero">Zero</span><span class="spin"><em>0</em><i class="spb"></i></span>
      <span class="chk wf-chk"></span><span class="wf-l wf-cum">Cumulative</span>
      <span class="btn wf-btn">Freq Scale</span>
      <span class="wf-l wf-aud">Audio</span>
    </div>
  </section>

  <!-- wspr main -->
  <section class="win ws">
    <div class="w-title ws-title">
      <svg class="w-ico"><use href="#earth"/></svg>
      <span class="w-cap ws-cap">WSPR-X&nbsp;&nbsp; v0.8&nbsp; r3058 &nbsp;&nbsp;&nbsp;by K1JT</span>
      <div class="caps dim ws-caps"><svg class="cap"><use href="#min"/></svg><svg class="cap cap-faint"><use href="#max"/></svg><svg class="cap"><use href="#cls"/></svg></div>
    </div>
    <div class="ws-menu"><span>File</span><span>Setup</span><span>View</span><span>Mode</span><span>Save</span><span>Help</span></div>
    <pre class="ws-head"> UTC   dB    DT        Freq   DF   Call</pre>
    <div class="ws-list">
<pre class="ws-rows">0824  -18   0.6   10.140179   -1   LA6LU
JO59     30
0824  -25   2.6   10.140193    0   &lt;SM/DC4LC&gt;
JO76VO   37
0824  -25   2.0   10.140208   -1   OK2SAM
JN99     27
0824   -8   2.9   10.140289    0   GM4SFW
IO77     37</pre>
      <div class="ws-sb"><span class="sb-btn sb-up"></span><span class="sb-track"></span><span class="sb-btn sb-dn"></span></div>
    </div>
    <div class="ws-lower">
      <div class="ws-clock"><span>2016 jul 23</span><span>08:31:32</span></div>
      <span class="ws-db">dB</span>
      <svg class="ws-meter" viewBox="1160 1068 68 166">
        <g class="ws-scale"><text x="1178" y="1085">60</text><text x="1178" y="1133">40</text><text x="1178" y="1181">20</text><text x="1178" y="1228">0</text></g>
        <path d="M1182 1079.500H1192V1222.500H1182M1182 1127.500H1192M1182 1175.500H1192M1186 1103.500H1192M1186 1151.500H1192M1186 1199H1192" fill="none" stroke="#333"/>
        <rect x="1194" y="1078" width="9" height="145" fill="#0e0"/>
        <rect x="1214" y="1072" width="2" height="158" fill="#8a8a8a"/>
        <rect x="1211" y="1147" width="9" height="16" fill="#eee" stroke="#888"/>
      </svg>
      <div class="ws-form">
        <span class="ws-lb">Band:</span><span class="combo">30 m<i class="cb-a"></i></span>
        <div class="ws-two"><span class="btn">Erase</span><span class="btn off">Tune</span></div>
        <span class="ws-lb">TX Pwr:</span><span class="combo">37 dBm<i class="cb-a"></i></span>
        <div class="ws-two"><span class="btn">Start Rx</span><span class="btn">Tx Next</span></div>
        <span class="ws-lb">TX Pct:</span><span class="combo">25&nbsp; %<i class="spb"></i></span>
        <div class="ws-ck"><span class="chk chk-on"></span><span>Upload Spots</span></div>
        <span class="ws-lb ws-clip">Tx Audio (Hz):</span><span class="combo">1500<i class="spb"></i></span>
        <div class="ws-ck off"><span class="chk chk-off"></span><span>Band Hop</span></div>
        <span class="ws-lb">Dial (MHz):</span><span class="combo">10.138700</span>
        <div class="ws-ck"><span class="chk"></span><span>Idle</span></div>
        <span class="ws-lb ws-ind">Tx (MHz):</span><span class="combo dis">10.140200</span>
        <div class="ws-ck"><span class="chk"></span><span>Tx Enable</span></div>
      </div>
    </div>
    <div class="ws-status">
      <span class="s-rec">Receiving:&nbsp; 60.0 dB</span><span class="s-mode">WSPR-2</span><span class="s-blank"></span>
      <svg class="grip" viewBox="0 0 14 14"><path d="M13 3L3 13M13 7L7 13M13 11L11 13" stroke="#aaa"/></svg>
    </div>
  </section>

  <!-- loudmax -->
  <section class="win plug lm">
    <div class="p-title">
      <svg class="p-ico" viewBox="0 0 26 22"><path d="M1 12H8M5 8V16M9 6V18M12 4H22V18H12Z" stroke="#9e9ccc" stroke-width="2" fill="#c8c7df"/><path d="M14 2L22 5L26 9V15L22 19" fill="none" stroke="#9e9ccc" stroke-width="2"/></svg>
      <span class="p-name">LoudMax64</span>
      <div class="caps dim p-caps"><svg class="cap"><use href="#min"/></svg><svg class="cap"><use href="#max"/></svg><svg class="cap"><use href="#cls"/></svg></div>
    </div>
    <div class="p-presets">
      <span class="pp-l">Presets:</span>
      <span class="pp-c">Default<i class="pp-a"></i></span>
      <span class="pp-b"><svg viewBox="0 0 18 16"><path d="M1 3H7L8 5H15V7H5L2 14H1ZM5 7H17L14 14H2Z" fill="#777"/></svg></span>
      <span class="pp-b"><svg viewBox="0 0 16 16"><path d="M1 1H15V15H1Z" fill="#777"/><rect x="4" y="1" width="8" height="5" fill="#eee"/><rect x="4" y="9" width="8" height="6" fill="#eee"/></svg></span>
    </div>
    <div class="lm-row">
      <div class="lm-dark">
        <div class="lm-plate">
          <div class="lm-left">
            <div class="lm-meter"><span class="lm-lr">L<br>R</span><div class="lm-bars"><i class="bar bar-a"></i><i class="bar bar-a"></i></div></div>
            <div class="lm-scale"><span>-30</span><span>-27</span><span>-24</span><span>-21</span><span>-18</span><span>-15</span><span>-12</span><span>-9</span><span>-6</span><span>-3</span><span>0</span></div>
            <div class="lm-slider"><span class="lm-track"></span><span class="lm-thumb lm-th1"></span></div>
            <div class="lm-txt"><span>Thresh:</span><em>-22.9</em><span>dB</span><span class="lm-link">Link</span><span>Output:</span><em>-6.1</em><span>dB</span></div>
            <div class="lm-slider"><span class="lm-track"></span><span class="lm-thumb lm-th2"></span></div>
            <div class="lm-scale"><span>-30</span><span>-27</span><span>-24</span><span>-21</span><span>-18</span><span>-15</span><span>-12</span><span>-9</span><span>-6</span><span>-3</span><span>0</span></div>
            <div class="lm-meter lm-meter2"><span class="lm-lr">L<br>R</span><div class="lm-bars"><i class="bar bar-b"></i><i class="bar bar-b"></i></div></div>
            <div class="lm-logo">L<span>oud</span><b>M</b><span>ax</span></div>
          </div>
          <div class="lm-right">
            <div class="lm-vnums"><span>0</span><span>1</span><span>2</span><span>4</span><span>6</span><span>9</span><span>12</span><span>15</span><span>18</span><span>24</span><span>30</span></div>
            <div class="lm-v"><i></i></div>
          </div>
        </div>
      </div>
    </div>
  </section>

  <!-- noise -->
  <section class="win plug nr">
    <div class="p-title">
      <svg class="p-ico" viewBox="0 0 26 22"><path d="M1 12H8M5 8V16M9 6V18M12 4H22V18H12Z" stroke="#9e9ccc" stroke-width="2" fill="#c8c7df"/><path d="M14 2L22 5L26 9V15L22 19" fill="none" stroke="#9e9ccc" stroke-width="2"/></svg>
      <span class="p-name">Noise Reduction</span>
      <div class="caps dim p-caps"><svg class="cap"><use href="#min"/></svg><svg class="cap"><use href="#max"/></svg><svg class="cap"><use href="#cls"/></svg></div>
    </div>
    <div class="p-presets">
      <span class="pp-l">Presets:</span>
      <span class="pp-c">Default<i class="pp-a"></i></span>
      <span class="pp-b"><svg viewBox="0 0 18 16"><path d="M1 3H7L8 5H15V7H5L2 14H1ZM5 7H17L14 14H2Z" fill="#777"/></svg></span>
      <span class="pp-b"><svg viewBox="0 0 16 16"><path d="M1 1H15V15H1Z" fill="#777"/><rect x="4" y="1" width="8" height="5" fill="#eee"/><rect x="4" y="9" width="8" height="6" fill="#eee"/></svg></span>
    </div>
    <div class="nr-body">
      <div class="knobs">
        <div class="knob"><span class="k-n">Offset</span><svg class="k-s" viewBox="0 0 36 36"><circle class="k-track" cx="18" cy="18" r="13.500" pathLength="360"/><circle class="k-val" cx="18" cy="18" r="13.500" pathLength="360" stroke-dasharray="30 360"/><circle class="k-dot" cx="18" cy="18" r="7"/></svg><span class="k-v">2,22 dB</span></div>
        <div class="knob"><span class="k-n">Ratio</span><svg class="k-s" viewBox="0 0 36 36"><circle class="k-track" cx="18" cy="18" r="13.500" pathLength="360"/><circle class="k-val" cx="18" cy="18" r="13.500" pathLength="360" stroke-dasharray="145 360"/><circle class="k-dot" cx="18" cy="18" r="7"/></svg><span class="k-v">10&nbsp; : 1</span></div>
        <div class="knob"><span class="k-n">Knee</span><svg class="k-s" viewBox="0 0 36 36"><circle class="k-track" cx="18" cy="18" r="13.500" pathLength="360"/><circle class="k-val" cx="18" cy="18" r="13.500" pathLength="360" stroke-dasharray="75 360"/><circle class="k-dot" cx="18" cy="18" r="7"/></svg><span class="k-v">1 dB</span></div>
        <div class="knob"><span class="k-n">Attack</span><svg class="k-s" viewBox="0 0 36 36"><circle class="k-track" cx="18" cy="18" r="13.500" pathLength="360"/><circle class="k-val" cx="18" cy="18" r="13.500" pathLength="360" stroke-dasharray="40 360"/><circle class="k-dot" cx="18" cy="18" r="7"/></svg><span class="k-v">5</span></div>
        <div class="knob"><span class="k-n">Release</span><svg class="k-s" viewBox="0 0 36 36"><circle class="k-track" cx="18" cy="18" r="13.500" pathLength="360"/><circle class="k-val" cx="18" cy="18" r="13.500" pathLength="360" stroke-dasharray="105 360"/><circle class="k-dot" cx="18" cy="18" r="7"/></svg><span class="k-v">25 ms</span></div>
      </div>
      <div class="nr-row nr-r1"><span class="nr-big">Window Function</span><span class="sel sel-wide"><i class="sel-l"></i><em>Gauss</em><i class="sel-r"></i></span></div>
      <div class="nr-row nr-r2"><span class="nr-big">FFT Size:</span><span class="sel sel-fft"><i class="sel-l"></i><em>512</em><i class="sel-r"></i></span><span class="nr-dot"></span><span class="nr-big nr-clip">Capture Noise Profile</span></div>
    </div>
  </section>
</div>
<script src="waterfall.js"></script>
</body>
</html>
```

FILE: styles.css
```css
*{box-sizing:border-box}
html,body{margin:0;padding:0;background:#fff}
body{width:2160px;height:1440px;overflow:hidden;font-family:"Open Sans","Noto Sans",sans-serif;color:#111}
.defs{position:absolute}
.desktop{position:relative;width:2160px;height:1440px;display:flex;flex-direction:column;overflow:hidden}
svg{display:block}
i,em{font-style:normal}
.ghost{position:absolute;left:340px;top:734px;width:1100px;height:40px}

/* back window */
.backwin{width:2146px;height:1380px;display:flex;flex-direction:column;background:#f0f0f0;flex:none}
.back-title{height:40px;background:#fff;display:flex;align-items:flex-start;padding:7px 0 0 3px;width:2160px}
.ico-app{width:22px;height:20px}
.back-name{margin-left:8px;font-size:16px;color:#bbb;line-height:14px}
.back-caps{margin-left:auto;margin-right:30px;gap:52px;color:#c4c4c4}
.back-menu{height:24px;background:#fff;width:2160px;padding-left:8px;font-size:18px;line-height:20px;color:#999}
.back-tool{height:108px;padding:24px 0 0 14px}
.back-group{width:200px;height:72px;border:1px solid #ddd;position:relative}
.back-legend{position:absolute;left:7px;top:-14px;background:#f0f0f0;font-size:17px;color:#222}
.back-combo{position:absolute;left:13px;top:26px;width:60px;height:30px;border:1px solid #aaa}
.back-mid{height:1121px;display:flex;padding-left:14px}
.back-black{width:2106px;background:#000}
.back-vscroll{width:26px;background:#f0f0f0;display:flex;flex-direction:column;justify-content:space-between;align-items:center;padding:8px 0;border-right:1px solid #ccc}
.back-hscroll{height:27px;margin-left:14px;display:flex;justify-content:space-between;align-items:center;padding:0 10px;border-bottom:2px solid #a0a0a0;border-left:1px solid #ddd;background:#efefef}
.chev{display:block;width:12px;height:12px;border:solid #bbb;border-width:2px 0 0 2px}
.chev-up{transform:rotate(45deg) scaleY(1)}
.chev-down{transform:rotate(225deg)}
.chev-left{transform:rotate(-45deg)}
.chev-right{transform:rotate(135deg)}
.chev.dark{border-color:#555;margin:0 auto}
.statusbar{height:60px;display:flex;align-items:center;padding:0 0 5px 15px;color:#111;font-family:"Noto Sans","Open Sans",sans-serif}
.st-label{white-space:nowrap;font-size:16px}
.st-combo{width:92px;height:28px;margin-left:9px;border:1px solid #aaa;background:#e6e6e6;position:relative;font-size:16px;padding-left:3px;line-height:26px}
.st-combo::after{content:"";position:absolute;right:5px;top:10px;border:4px solid transparent;border-top:6px solid #222;border-bottom:0}
.st-off{background:#c9c9c9;color:#777}
.st-off::after{border-top-color:#999}
.st-sep{width:1px;height:34px;background:#bbb;margin:0 11px 0 9px}
.st-rt{margin:0 5px 0 7px}
.st-xr{margin:0 27px 0 29px}
.st-prog{width:1394px;height:29px;border:1px solid #c0c0c0;background:#e4e4e4}
.st-fill{width:263px;height:100%;background:#09b029}
.st-dsp{margin-left:3px}

/* taskbar */
.taskbar{height:60px;flex:none;display:flex;background:linear-gradient(90deg,#1a1512,#221916 30%,#1d1512 70%,#0e0b0a 75%,#1a1210 85%,#0a0908);color:#fff;position:relative}
.tb-start{display:flex;flex:none}
.tb-slot{width:72px;display:flex;align-items:center;justify-content:center}
.tb-win{width:24px;height:35px}
.tb-s{width:26px;height:36px}
.tb-apps{display:flex;flex:none;margin-left:2px;margin-right:5px}
.tb-app{width:70.200px;display:flex;align-items:center;justify-content:center;height:60px;padding-bottom:4px;position:relative}
.tb-app.on::after{content:"";position:absolute;left:7px;right:7px;bottom:0;height:3px;background:#f9cdb4}
.tb-app.active{background:#3d3a38;width:68px}
.tb-app.active::after{left:0;right:0}
.tb-i{width:34px;height:38px}
.tray{display:flex;align-items:center;flex:none}
.tr{width:48px;display:flex;justify-content:center}
.tr-kb{margin-left:5px;margin-right:8px}
.tr-i{width:24px;height:30px}
.clock{display:flex;flex-direction:column;align-items:center;font-size:17px;line-height:27px;font-family:"Noto Sans",sans-serif;width:100px;color:#eee}

/* common window bits */
.caps{display:flex}
.cap{width:16px;height:16px;flex:none}
.dim{color:#a8a8a8}
.cap-faint{color:#e4e4e4}

/* browser */
.browser{position:absolute;left:33px;top:14px;width:1672px;height:720px;border-top:1px solid #c9a58c;box-shadow:0 0 14px rgba(0,0,0,.28);background:#f5f5f5;display:flex;flex-direction:column}
.br-top{height:96px;background:#c6c6c6;display:flex;flex-direction:column;justify-content:space-between}
.br-row1{display:flex;justify-content:space-between}
.br-menu{display:flex;height:29px;background:#e6e6e6;width:579px;padding-left:10px;align-items:center;font-size:16.700px;gap:18px;color:#111}
.br-caps{color:#111;gap:54px;margin:15px 27px 0 0}
.tabs{display:flex;height:42px;align-items:stretch}
.tab{display:flex;align-items:center;width:340px;padding-left:39px;font-size:17.300px;flex:none}
.tab-ico{width:24px;height:24px;flex:none}
.tab-text{margin-left:8px;white-space:nowrap;color:#111}
.spk{width:20px;height:24px;margin-left:15px;flex:none}
.tab-x{width:17px;height:17px;margin-left:15px;color:#555;flex:none}
.tab-on{width:318px;padding-left:14px;background:#f5f5f5;border-radius:20px 20px 0 0;position:relative}
.tab-on .tab-x{margin-left:109px}
.tab-on::before,.tab-on::after{content:"";position:absolute;bottom:0;width:12px;height:12px}
.tab-on::before{left:-12px;background:radial-gradient(circle at 0 0,transparent 11.500px,#f5f5f5 12px)}
.tab-on::after{right:-12px;background:radial-gradient(circle at 100% 0,transparent 11.500px,#f5f5f5 12px)}
.tab-plus{margin-left:15px;align-self:center}
.tab-plus svg{width:20px;height:20px}
.nav{height:52px;display:flex;align-items:center;padding:3px 0 0 10px;background:#f5f5f5;position:relative}
.back-btn{width:47px;height:47px;border-radius:50%;background:#fff;border:1px solid #ccc;display:flex;align-items:center;justify-content:center;position:relative;z-index:1;flex:none}
.back-btn svg{width:24px;height:26px}
.urlbox{width:855px;height:41px;margin-left:-23px;background:#fff;border:1px solid #e4e4e4;border-radius:0 2px 2px 0;display:flex;align-items:center;padding-left:32px;flex:none}
.info{width:21px;height:21px;flex:none}
.url{font-size:19.500px;color:#888;margin-left:9px;padding-left:6px;border-left:1px solid #ddd;border-right:1px solid #ddd;line-height:32px;white-space:nowrap;width:741px}
.url b{font-weight:400;color:#111}
.reload{width:20px;height:24px;margin-left:15px;flex:none}
.mask{width:26px;height:22px;margin-left:18px;flex:none}
.searchbox{width:280px;height:41px;margin-left:19px;background:#fff;border:1px solid #e4e4e4;display:flex;align-items:center;padding-left:11px;flex:none;border-radius:2px}
.mag{width:20px;height:24px;flex:none}
.q{font-size:19.500px;margin-left:8px;color:#111;white-space:nowrap;width:214px}
.go{width:15px;height:18px;flex:none}
.tools{display:flex;align-items:center;margin-left:17px;flex:none}
.t{height:30px;flex:none}
.t-star{width:26px}
.t-sep{width:1px;height:26px;background:#ccc;margin-left:11px}
.t-clip{width:22px;margin-left:11px}
.t-poc{width:26px;margin-left:31px}
.t-dl{width:24px;margin-left:29px}
.t-home{width:26px;margin-left:28px}
.t-smile{width:24px;margin-left:27px}
.t-sh{width:24px;margin-left:30px}
.t-sep2{margin-left:17px;height:50px;background:#e2e2e2}
.t-menu{width:26px;margin-left:19px;height:24px}
.bookmarks{height:42px;display:flex;align-items:center;padding:3px 0 0 7px;font-size:17.300px;border-bottom:2px solid #bdbdbd;background:#f5f5f5}
.bm-ico{width:23px;height:23px;flex:none}
.bm{margin-left:7px;white-space:nowrap;color:#111}
.bm-gh{margin-left:11px;height:25px}
.bm-gl{margin-left:12px}
.web{flex:1;display:flex;min-height:0;background:#fff;overflow:hidden}
.web-strip{width:38px;background:#8494a9;flex:none}
.web-main{width:1570px;display:flex;flex:none;background:#fff;overflow:hidden}
.web-scroll{width:26px;background:#f0f0f0;display:flex;flex-direction:column;align-items:center;padding-top:12px;flex:none;position:relative}
.web-thumb{width:26px;height:62px;background:#cdcdcd;margin-top:53px}
.web-scroll .chev-down{margin-top:362px}
.side{width:314px;margin-left:4px;flex:none;font-family:"Liberation Sans",Arial,sans-serif;color:#111}
.blk{background:#eef3fb;border:1px solid #ccc;margin-bottom:8px;width:314px;font-size:17.200px}
.blk-login{height:245px;border-top:0;display:flex;flex-direction:column;align-items:center;padding-top:13px}
.f-label{font-weight:700;font-size:17px;line-height:20px}
.f-label i{color:#f00;font-weight:400}
.f-2{margin-top:2px}
.f-input{display:block;width:157px;height:28px;border:1px solid #767676;background:#fff;margin-top:1px}
.f-link{color:#3b6798;font-size:17.300px;line-height:22px}
.f-l1{margin-top:15px}
.f-btn{margin-top:19px;width:76px;height:28px;border:1px solid #bbb;background:#e4e4e4;text-align:center;line-height:26px;font-size:16.500px}
.blk h2{margin:0;color:#3b6798;font-size:22.500px;line-height:26px;font-weight:700}
.blk p{margin:0;line-height:22.500px;white-space:nowrap}
.blk-freq{height:184px;padding:13px 0 0 12px}
.blk-freq p{margin-top:15px}
.blk-spot{height:200px;padding:13px 0 0 12px}
.blk-spot p{margin-top:14px}
.map{width:1200px;height:526px;margin:3px 0 0 32px;border:3px solid #111;border-bottom:0;position:relative;flex:none;background:#aecbfd;overflow:hidden}
.map-svg{width:1197px;height:525px}
.coast{fill:#86adf8;stroke:#86adf8;stroke-width:12px}
.land-base{fill:#e5ecd3}
.sc-land{fill:#c6e0bb}
.sc-cream{fill:#ece8cc}
.sc-snow{fill:#f4f2ea}
.sc-lake{fill:#a4c5fc}
.sc-border{fill:none;stroke:#7f7f7f;stroke-width:1.500}
.maptype{position:absolute;left:15px;top:14px;display:flex;height:46px;background:#fff;border-radius:2px;box-shadow:0 1px 3px rgba(0,0,0,.25);font-family:Roboto,sans-serif;font-size:16px;align-items:center}
.mt-on{width:64px;text-align:center;font-weight:500;color:#111;border-right:1px solid #e6e6e6;line-height:46px}
.mt-off{width:85px;text-align:center;color:#565656}
.borders path{fill:none;stroke:#7f7f7f;stroke-width:1.200;vector-effect:non-scaling-stroke}
.map-svg text{text-anchor:middle;font-family:Roboto,sans-serif}
.lbl-b text{font-weight:500;fill:#222;paint-order:stroke;stroke:rgba(255,255,255,.6);stroke-width:2.500px}
.lbl-19 text{font-size:21px}
.lbl-15 text{font-size:16.500px}
.lbl-r text{font-size:16.500px;fill:#222;paint-order:stroke;stroke:rgba(255,255,255,.7);stroke-width:2.500px}
.lbl-i text{font-size:15.500px;font-style:italic;fill:#4c6794}
.links path{fill:none;stroke-width:3}
.pin-box rect{fill:#0000f0;stroke:#000;stroke-width:1}
.map-svg .pin-text text{font-family:"Liberation Sans",Arial,sans-serif;font-size:16px;fill:#fff}

/* generic */
.win{position:absolute;background:#f0f0f0;display:flex;flex-direction:column;font-family:"Open Sans","Noto Sans",sans-serif;color:#111}
.w-title{background:#fff;display:flex;align-items:center;flex:none}
.w-ico{width:24px;height:24px;flex:none}
.w-cap{color:#a3a3a3;font-size:18px;white-space:nowrap;margin-left:6px}
.btn{display:flex;align-items:center;justify-content:center;border:1px solid #fff;border-right-color:#888;border-bottom-color:#888;box-shadow:0 0 0 1px #dcdcdc;background:#f0f0f0;font-size:16px;white-space:nowrap}
.btn.off{color:#9a9a9a}
.chk{display:block;width:18px;height:19px;background:#fff;border:1px solid #ccc;border-top:2px solid #888;border-left:2px solid #888;flex:none}
.chk-on{position:relative}
.chk-on::after{content:"";position:absolute;left:2px;top:0;width:7px;height:11px;border:solid #111;border-width:0 2px 2px 0;transform:rotate(40deg)}
.chk-off{background:#f0f0f0}
.spb{display:flex;flex-direction:column;margin-left:auto;width:17px;height:100%;background:linear-gradient(#fff,#fff) 0 50%/100% 2px no-repeat,#f0f0f0;border-left:1px solid #ddd;position:relative;flex:none}
.spb::before,.spb::after{content:"";position:absolute;left:6px;border:3px solid transparent}
.spb::before{top:3px;border-bottom:4px solid #222;border-top:0}
.spb::after{bottom:3px;border-top:4px solid #222;border-bottom:0}

/* waterfall */
.wf{left:184px;top:757px;width:726px;height:345px}
.wf .w-title{height:44px;padding:0 0 2px 11px}
.wf-caps{margin-left:auto;margin-right:27px;gap:53px}
.wf-body{margin-left:16px;width:693px;flex:none;margin-top:2px}
.ruler{width:693px;height:30px}
.ruler-t text{font-family:"Liberation Sans",Arial,sans-serif;font-size:22px;fill:#000}
.wf-view{position:relative;height:228px}
.wf-canvas{display:block;width:693px;height:228px}
.wf-t{position:absolute;left:5px;color:#fff;font-family:"Liberation Sans",Arial,sans-serif;font-size:16.500px;line-height:18px}
.wf-t1{top:36px}
.wf-t2{top:106px}
.wf-ctl{display:flex;align-items:center;flex:1;padding-left:33px;font-size:16px}
.spin{display:flex;width:39px;height:26px;background:#fff;border:1px solid #ccc;border-top:2px solid #888;border-left:2px solid #888;margin-left:6px;line-height:22px;padding-left:3px;flex:none}
.wf-l{white-space:nowrap}
.wf-gain{margin-left:24px}
.wf-zero{margin-left:23px}
.wf-chk{margin-left:26px}
.wf-cum{margin-left:8px}
.wf-btn{width:113px;height:35px;margin-left:12px;border:2px solid #fff;border-right-color:#888;border-bottom-color:#888;box-shadow:0 0 0 1px #bbb}
.wf-aud{margin-left:46px}

/* wspr */
.ws{left:980px;top:762px;width:613px;height:516px}
.ws-title{height:44px;padding:0 0 2px 10px}
.ws-cap{margin-left:15px}
.ws-caps{margin-left:auto;margin-right:27px;gap:53px}
.ws-menu{height:30px;border-bottom:1px solid #bbb;display:flex;padding-left:6px;font-size:17.500px;color:#a3a3a3;gap:12.500px;align-items:center;flex:none}
.ws-head{margin:2px 0 0 12px;width:588px;height:22px;background:#acacac;font:20px/22px "Liberation Mono","Courier New",monospace;color:#222;padding-left:6px;flex:none;white-space:pre}
.ws-list{margin:7px 0 0 12px;width:587px;height:185px;background:#fff;border:1px solid #a0a0a0;border-width:2px 0 0 2px;display:flex;flex:none}
.ws-rows{margin:3px 0 0 4px;font:20px/22px "Liberation Mono","Courier New",monospace;color:#222;flex:1;overflow:hidden}
.ws-sb{width:26px;display:flex;flex-direction:column;flex:none;background:#e6e6e6}
.sb-btn{height:26px;background:#f0f0f0;border:1px solid #fff;border-right-color:#888;border-bottom-color:#888;position:relative;flex:none}
.sb-btn::after{content:"";position:absolute;left:6px;top:9px;border:6px solid transparent}
.sb-up::after{border-bottom:7px solid #aaa;border-top:0}
.sb-dn::after{border-top:7px solid #aaa;border-bottom:0}
.sb-track{flex:1;background:#eaeaea}
.ws-lower{height:198px;display:flex;padding-left:12px;flex:none}
.ws-clock{width:132px;height:60px;margin-top:69px;background:#000;border:3px solid #999;color:#ff0;font:32px/22px "Liberation Sans",Arial,sans-serif;display:flex;flex-direction:column;align-items:center;overflow:hidden;white-space:nowrap;flex:none;justify-content:flex-start}
.ws-clock span{display:block;height:38px;line-height:22px;flex:none;position:relative;top:-3px}
.ws-db{width:20px;margin:88px 0 0 13px;font-size:16px;line-height:18px;flex:none}
.ws-meter{width:68px;height:166px;margin:16px 0 0 4px;flex:none}
.ws-scale text{font-family:"Open Sans",sans-serif;font-size:16px;text-anchor:end;fill:#111}
.ws-form{display:grid;grid-template-columns:92px 87px 166px;grid-template-rows:36px 36px 28.500px 29px 29px 29px;margin:5px 0 0 7px;align-items:center;font-size:16px;flex:none}
.ws-lb{white-space:nowrap;overflow:hidden;width:85px}
.ws-ind{padding-left:6px;width:92px}
.combo{display:flex;height:25px;background:#fff;border:1px solid #ddd;border-top:2px solid #777;border-left:2px solid #777;align-items:center;padding-left:3px;white-space:nowrap;font-size:16.500px;line-height:21px}
.combo.dis{background:#f0f0f0;color:#9a9a9a}
.cb-a{margin-left:auto;width:16px;height:100%;background:#f0f0f0;border:1px solid #fff;border-right-color:#888;border-bottom-color:#888;position:relative;flex:none}
.cb-a::after{content:"";position:absolute;left:3px;top:8px;border:4px solid transparent;border-top:5px solid #111;border-bottom:0}
.ws-two{display:flex;justify-content:space-between;margin-left:20px;height:33px;gap:7px}
.ws-two .btn{flex:1;font-size:16px}
.ws-ck{display:flex;align-items:center;margin-left:19px;gap:9px;white-space:nowrap}
.ws-ck.off{color:#9a9a9a}
.ws-status{display:flex;height:27px;flex:none;position:relative;font-size:15.500px;line-height:25px;padding-left:1px}
.s-rec{width:156px;background:#0f0;border:1px solid #bbb;padding-left:5px;white-space:nowrap}
.s-mode{width:60px;margin-left:5px;background:#ff0;border:1px solid #bbb;padding-left:1px}
.s-blank{width:152px;margin-left:5px;border:1px solid #bbb;border-right-color:#fff;border-bottom-color:#fff}
.grip{position:absolute;right:0;bottom:0;width:14px;height:14px}

/* plugins */
.plug{background:#f0f0f0;width:397px}
.p-title{background:#fff;height:36px;display:flex;align-items:center;padding-left:3px;flex:none}
.p-ico{width:26px;height:22px;flex:none}
.p-name{font-size:17px;color:#9aa2ad;margin-left:5px;white-space:nowrap}
.p-caps{margin-left:auto;margin-right:27px;gap:53px}
.p-presets{height:32px;background:#ebe9dc;display:flex;align-items:center;padding-left:5px;font:14px "DejaVu Sans",sans-serif;color:#222;flex:none}
.pp-l{width:59px}
.pp-c{width:271px;height:24px;background:#fff;border:1px solid #9a9a9a;border-radius:3px;padding-left:5px;line-height:22px;display:flex}
.pp-a{margin-left:auto;width:20px;height:100%;background:#e2e0d4;border-left:1px solid #bbb;position:relative;flex:none}
.pp-a::after{content:"";position:absolute;left:4px;top:5px;width:8px;height:8px;border:solid #666;border-width:0 2px 2px 0;transform:rotate(45deg)}
.pp-b{width:24px;height:24px;border:1px solid #9a9a9a;border-radius:5px;background:#e6e4d8;margin-left:4px;display:flex;align-items:center;justify-content:center;flex:none}
.pp-b svg{width:15px;height:14px}
.lm{left:1604px;top:752px;height:283px}
.lm-row{flex:1;background:#f0f0f0;display:flex}
.lm-dark{width:340px;background:#252525;padding:12px 8px 8px}
.lm-plate{width:324px;height:195px;border-radius:6px;background:linear-gradient(#565656,#3d3d3d);display:flex;padding:12px 0 0 17px;box-shadow:0 1px 3px #000}
.lm-left{width:240px;flex:none}
.lm-meter{height:24px;background:#3a3a3a;border-radius:2px;box-shadow:inset 0 0 2px #222;display:flex;align-items:center;padding-left:3px}
.lm-lr{font:700 7px/8px "Liberation Sans",sans-serif;color:#bbb;width:6px}
.lm-bars{width:223px;height:17px;background:#1d1d1d;display:flex;flex-direction:column;justify-content:center;gap:1px;padding-left:1px;border-radius:2px}
.bar{display:block;height:7px;background:#e08600}
.bar-a{width:108px}
.bar-b{width:176px}
.lm-scale{display:grid;grid-template-columns:repeat(11,22px);height:20px;margin-left:-3px;font:11.500px "Liberation Sans",sans-serif;color:#bdbdbd;text-align:center;padding-top:6px;position:relative}
.lm-scale span{position:relative;line-height:12px}
.lm-scale span::before{content:"";position:absolute;left:50%;top:-5px;width:1px;height:4px;background:#aaa}
.lm-slider{height:14px;background:#383838;margin-top:2px;border-radius:2px;position:relative;box-shadow:inset 0 0 2px #222}
.lm-track{position:absolute;left:6px;right:6px;top:6px;height:2px;background:#222}
.lm-thumb{position:absolute;top:0;width:19px;height:14px;background:linear-gradient(90deg,#777,#ddd 45%,#777 50%,#ddd 55%,#777)}
.lm-th1{left:53px}
.lm-th2{left:176px}
.lm-txt{display:flex;align-items:center;height:20px;margin:12px 0 11px -2px;font:700 12.500px "Liberation Sans",sans-serif;color:#8a8a8a;gap:2px;white-space:nowrap}
.lm-txt em{background:#1b1b1b;color:#9db0c8;width:32px;height:15px;line-height:15px;text-align:center;font-weight:400;border-radius:2px;flex:none;font-size:13px}
.lm-txt span{flex:none}
.lm-txt span:first-child{width:43px}
.lm-link{margin:0 13px 0 15px;width:28px}
.lm-meter2{margin-top:1px}
.lm-logo{text-align:center;color:#e89018;font:400 15px "Liberation Sans",sans-serif;margin-top:2px;padding-left:48px;letter-spacing:1px;line-height:16px;font-variant:small-caps}
.lm-logo b{font-weight:400;font-size:19px;color:#e46a00}
.lm-right{display:flex;margin-left:2px}
.lm-vnums{width:28px;display:flex;flex-direction:column;justify-content:space-between;font:12px/12px "Liberation Sans",sans-serif;color:#bdbdbd;text-align:center;height:163px}
.lm-v{width:18px;height:163px;background:#3a3a3a;padding:6px 4px;margin-left:2px;border-radius:2px}
.lm-v i{display:block;width:10px;height:69px;background:#e05a00}
.nr{left:1603px;top:1039px;height:216px;background:#000}
.nr-body{flex:1;background:#000;border:1px solid #333;border-top:0;color:#ddd;font-family:"Noto Sans","Open Sans",sans-serif;padding-left:5px}
.knobs{display:flex;height:87px;padding-top:8px}
.knob{width:66.800px;display:flex;flex-direction:column;align-items:center;flex:none}
.k-n{line-height:24px;font-size:17.500px;white-space:nowrap}
.k-s{width:36px;height:36px;margin-top:1px}
.k-track,.k-val{fill:none;stroke-width:7;transform:rotate(135deg);transform-origin:18px 18px}
.k-track{stroke:#7a6d68;stroke-dasharray:270 90}
.k-val{stroke:#d8d4d0}
.k-dot{fill:#8c8480;stroke:#222;stroke-width:1}
.k-v{font-size:15.500px;line-height:18px;white-space:nowrap}
.nr-row{display:flex;align-items:center;height:28px}
.nr-r1{margin-top:2px;padding-left:2px}
.nr-r2{padding-left:2px}
.nr-big{font-size:16.700px;white-space:nowrap}
.sel{display:flex;height:21px;border:1px solid #8a807c;border-radius:3px;align-items:center;font-size:13px}
.sel-wide{width:189px;margin-left:6px}
.sel-fft{width:64px;margin-left:5px}
.sel em{flex:1;text-align:center}
.sel-l,.sel-r{width:9px;height:100%;background:#7c706a;position:relative;flex:none}
.sel-l::after,.sel-r::after{content:"";position:absolute;top:5px;left:2px;border:5px solid transparent}
.sel-l::after{border-right:5px solid #eee;border-left:0}
.sel-r::after{border-left:5px solid #eee;border-right:0}
.nr-dot{width:8px;height:8px;border-radius:50%;background:#bbb;margin:0 9px 0 12px;flex:none}
.nr-clip{width:162px;overflow:hidden}
.ico-sstv{font:700 9px "Liberation Sans",sans-serif;text-anchor:middle;fill:#1116d8}
.ico-pdf{font:700 12px "Liberation Sans",sans-serif;text-anchor:middle;fill:#222}
.ico-cmd{font:10px "Liberation Mono",monospace;fill:#fff}
```

FILE: waterfall.js
```js
(function () {
  var cv = document.getElementById('wf');
  var g = cv.getContext('2d');
  var W = 693, H = 228, WFH = 151;
  var seed = 12345;
  function rnd() { seed = (seed * 16807) % 2147483647; return seed / 2147483647; }
  function px(X) { return 180 + X / 2.119 - 200; }
  function py(Y) { return 750 + Y / 3 - 833; }
  // X, half width, Y start, Y end, strength
  var S = [
    [718,7,250,405,.85],[830,18,250,408,1.5],[830,40,250,408,.58],[918,8,250,405,.76],[948,8,250,405,.9],[1020,6,250,405,.68],[1105,13,250,405,1.25],[572,5,270,405,.58],[282,2,250,405,.5],[100,2,250,405,.42],[312,2,250,405,.35],[48,2,250,345,.8],
    [800,16,415,612,1.5],[840,14,415,612,1.5],[820,32,415,612,.58],[915,6,415,510,.85],[915,12,415,510,.5],[1075,6,415,610,.65],[285,2,415,610,.58],[360,2,415,450,.58],[100,2,415,610,.45],[555,5,505,612,.75],[675,2,430,610,.45],[745,3,430,610,.42],[870,5,430,610,.5],[990,2,420,610,.35],[190,2,430,520,.35],
    [648,6,622,700,.72],[765,6,622,700,.72],[912,5,622,700,.62],[995,6,622,700,.65],[1068,9,622,700,1.2],[1133,5,622,700,.7],[555,3,622,700,.7],[95,2,622,700,.42],[350,2,650,700,.45],[185,2,670,700,.4]
  ];
  var stops = [[0,[0,0,0]],[.18,[0,0,130]],[.32,[0,50,255]],[.48,[0,210,230]],[.6,[0,240,60]],[.72,[230,240,0]],[.84,[250,30,30]],[1,[255,0,110]]];
  function col(v) {
    if (v <= 0) return 'rgb(0,0,8)';
    if (v > 1) v = 1;
    for (var i = 1; i < stops.length; i++) {
      if (v <= stops[i][0]) {
        var a = stops[i - 1], b = stops[i], t = (v - a[0]) / (b[0] - a[0]);
        return 'rgb(' + Math.round(a[1][0] + (b[1][0] - a[1][0]) * t) + ',' + Math.round(a[1][1] + (b[1][1] - a[1][1]) * t) + ',' + Math.round(a[1][2] + (b[1][2] - a[1][2]) * t) + ')';
      }
    }
    return 'rgb(255,0,110)';
  }
  g.fillStyle = '#000008';
  g.fillRect(0, 0, W, H);
  var wob = {};
  for (var y = 0; y < WFH; y += 2) {
    for (var i0 = 0; i0 < S.length; i0++) {
      wob[i0] = Math.sin(y / 7 + i0) * 2.4 + (rnd() - .5) * 2;
    }
    for (var x = 0; x < W; x += 2) {
      var r = rnd();
      var v = r < .48 ? 0 : .14 + Math.pow(r - .48, 1.5) * .45;
      if (r > .97) v = .38;
      for (var i = 0; i < S.length; i++) {
        var s = S[i];
        if (y < py(s[2]) || y > py(s[3])) continue;
        var d = (x - px(s[0]) - wob[i]) / (s[1] / 2.119);
        if (Math.abs(d) > 2.6) continue;
        var a = s[4] * Math.exp(-d * d * .7) * (.6 + rnd() * .55);
        if (a > v) v = a;
      }
      // faint horizontal sweeps across the strong band in the top section
      if (x > px(730) && x < px(1060) && rnd() > .5 && (Math.abs(y - py(288)) < 1.5 || Math.abs(y - py(322)) < 1.5 || Math.abs(y - py(352)) < 1.5 || Math.abs(y - py(402)) < 1.5)) {
        v = Math.max(v, .3 + rnd() * .18);
      }
      g.fillStyle = col(v);
      g.fillRect(x, y, 2, 2);
    }
  }
  g.fillStyle = '#ffffa8';
  g.fillRect(0, 53, W, 2);
  g.fillRect(0, 121, W, 2);

  // lower spectrum plot
  var gr = g.createLinearGradient(0, WFH, 0, H);
  gr.addColorStop(0, '#001078');
  gr.addColorStop(.6, '#000650');
  gr.addColorStop(1, '#000010');
  g.fillStyle = gr;
  g.fillRect(0, WFH, W, H - WFH);
  g.fillStyle = '#eee';
  var rows = [162, 173, 184, 195, 206, 217];
  rows.forEach(function (ry) { for (var xx = 0; xx < W; xx += 3) g.fillRect(xx, ry, 1, 1); });
  for (var m = 0; m < 10; m++) {
    var mx = Math.round(68 + m * 68.2);
    for (var yy = WFH; yy < H; yy += 3) g.fillRect(mx, yy, 1, 1);
  }
  var bumps = [[715,8,3],[725,6,3],[835,14,9],[915,10,3],[945,10,3],[1025,6,4],[1100,14,9],[58,6,3]];
  g.strokeStyle = '#17d417';
  g.lineWidth = 1;
  g.beginPath();
  for (var q = 0; q < W; q += 2) {
    var X = (q + 20) * 2.119;
    var val = 209 + (rnd() - .5) * 3.4;
    bumps.forEach(function (b) { var z = (X - b[0]) / b[1]; val -= b[2] * Math.exp(-z * z); });
    if (q === 0) g.moveTo(q, val); else g.lineTo(q, val);
  }
  g.stroke();
})();
```
